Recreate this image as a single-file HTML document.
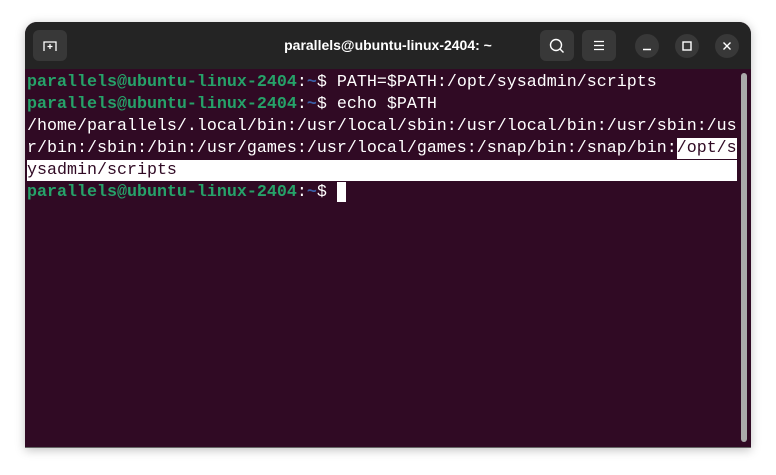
<!DOCTYPE html>
<html><head><meta charset="utf-8"><style>
html,body{margin:0;padding:0;background:#fff;width:776px;height:475px;overflow:hidden}
.win{position:absolute;left:25px;top:22px;width:726px;height:425px;border-radius:12px 12px 0 0;background:#300a24;overflow:hidden;box-shadow:0 2px 10px rgba(0,0,0,.25);border-bottom:1px solid #666}
.hdr{position:absolute;left:0;top:0;width:726px;height:47px;background:#242424}
.title{position:absolute;left:0;right:0;top:0;text-align:center;color:#fff;font:bold 14px "Liberation Sans",sans-serif;line-height:47px}
.btn{position:absolute;top:8px;width:34px;height:31px;border-radius:6px;background:#383838}
.cb{position:absolute;top:12px;width:24px;height:24px;border-radius:50%;background:#383838}
.term{position:absolute;left:2px;top:50px;font:16.67px "Liberation Mono",monospace;line-height:22px;color:#fff;white-space:pre}
.g{color:#26a269;font-weight:bold}.b{color:#3b5fa6;font-weight:bold}
.hl{background:#fff;color:#300a24;padding:1px 0}
.sb{position:absolute;left:716px;top:51px;width:6px;height:369px;border-radius:3px;background:#aaa}
.cur{position:absolute;left:312px;top:160px;width:9px;height:20px;background:#fff}
</style></head><body>
<div class="win">
<div class="hdr">
<div class="btn" style="left:8px"><svg width="34" height="31"><path d="M11 21V12h12v9M17 14v5M14.5 16.5h5" stroke="#fff" stroke-width="1.3" fill="none"/></svg></div>
<div class="title">parallels@ubuntu-linux-2404: ~</div>
<div class="btn" style="left:515px"><svg width="34" height="31"><circle cx="16" cy="15" r="5.5" stroke="#fff" stroke-width="1.4" fill="none"/><path d="M20 19l3.5 3.5" stroke="#fff" stroke-width="1.4"/></svg></div>
<div class="btn" style="left:557px"><svg width="34" height="31"><path d="M12 11.5h10M12 15.5h10M12 19.5h10" stroke="#fff" stroke-width="1.2"/></svg></div>
<div class="cb" style="left:610px"><svg width="24" height="24"><path d="M8 15.5h8" stroke="#fff" stroke-width="1.4"/></svg></div>
<div class="cb" style="left:650px"><svg width="24" height="24"><rect x="8" y="8" width="8" height="8" stroke="#fff" stroke-width="1.4" fill="none"/></svg></div>
<div class="cb" style="left:690px"><svg width="24" height="24"><path d="M8.5 8.5l7 7M15.5 8.5l-7 7" stroke="#fff" stroke-width="1.4"/></svg></div>
</div>
<div class="term"><span class="g">parallels@ubuntu-linux-2404</span>:<span class="b">~</span>$ PATH=$PATH:/opt/sysadmin/scripts
<span class="g">parallels@ubuntu-linux-2404</span>:<span class="b">~</span>$ echo $PATH
/home/parallels/.local/bin:/usr/local/sbin:/usr/local/bin:/usr/sbin:/us
r/bin:/sbin:/bin:/usr/games:/usr/local/games:/snap/bin:/snap/bin:<span class="hl">/opt/s</span>
<span class="hl">ysadmin/scripts                                                        </span>
<span class="g">parallels@ubuntu-linux-2404</span>:<span class="b">~</span>$ </div>
<div class="cur"></div>
<div class="sb"></div>
</div>
</body></html>
